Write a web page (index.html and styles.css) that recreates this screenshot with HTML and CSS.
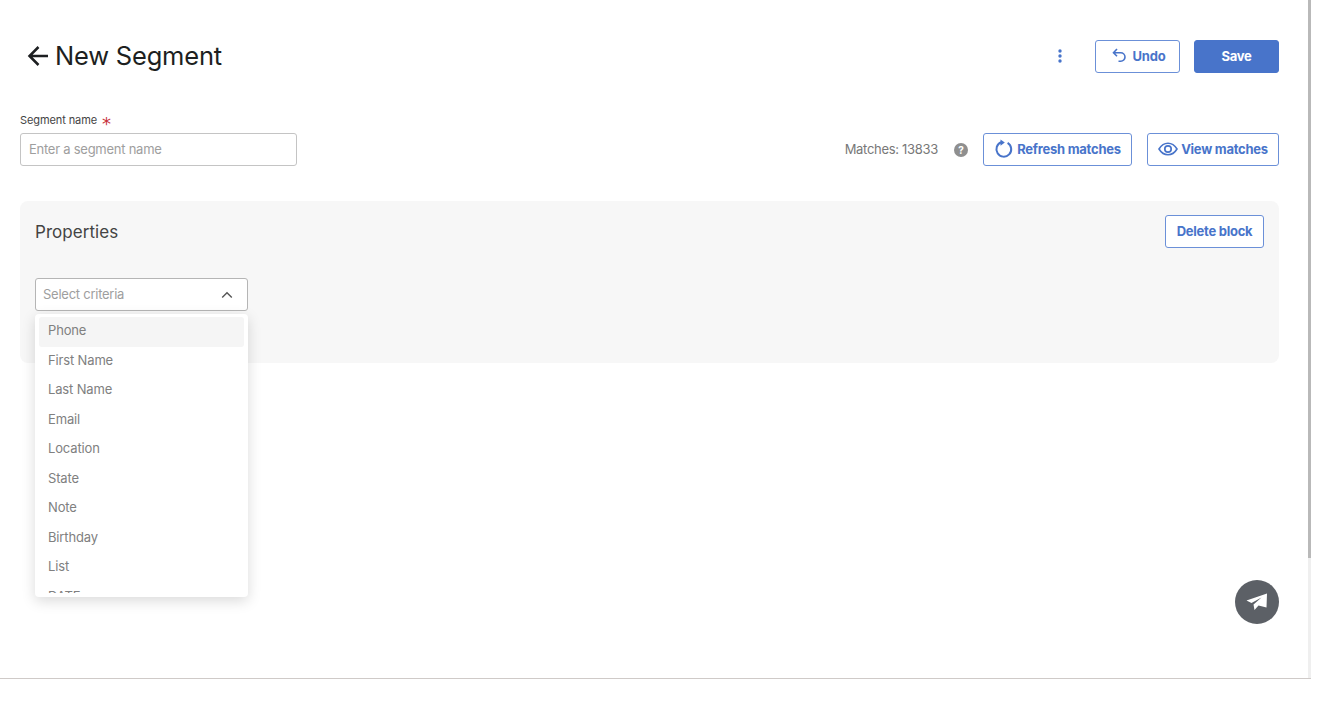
FILE: index.html
```html
<!DOCTYPE html>
<html lang="en">
<head>
<meta charset="utf-8">
<title>New Segment</title>
<link rel="stylesheet" href="styles.css">
</head>
<body>
<div class="frame">
  <div class="page">
    <header class="top">
      <h1 class="title">
        <svg class="back" width="24" height="24" viewBox="0 0 24 24"><path d="M22 12H3.500M12.500 3l-9 9 9 9" fill="none" stroke="#1d1f21" stroke-width="2.500"/></svg>
        New Segment
      </h1>
      <div class="actions">
        <svg class="dots" width="4" height="14" viewBox="0 0 4 14"><circle cx="2" cy="2" r="1.700"/><circle cx="2" cy="7" r="1.700"/><circle cx="2" cy="12" r="1.700"/></svg>
        <button class="btn undo">
          <svg width="15" height="15" viewBox="0 0 15 15"><path d="M2.500 4.700h6.200a4.300 4.300 0 0 1 0 8.600H6.500M5 1 1.500 4.700 5 8.200" fill="none" stroke="#4874ca" stroke-width="1.600"/></svg>
          Undo
        </button>
        <button class="btn solid">Save</button>
      </div>
    </header>

    <section class="fields">
      <div class="field">
        <label class="label">Segment name <span class="req">*</span></label>
        <div class="input"><span class="ph">Enter a segment name</span></div>
      </div>
      <div class="matches">
        <span class="count">Matches: 13833</span>
        <svg class="help" width="14" height="14" viewBox="0 0 14 14"><circle cx="7" cy="7" r="7" fill="#8f8f8f"/><text x="7" y="10.800" text-anchor="middle" class="help-mark">?</text></svg>
        <button class="btn refresh">
          <svg width="20" height="20" viewBox="0 0 20 20"><path d="M7.300 3.300a7.400 7.400 0 1 0 6.300.6" fill="none" stroke="#4874ca" stroke-width="2"/><path d="M6.500.5v6.200l4.300-3.100z" fill="#4874ca"/></svg>
          Refresh matches
        </button>
        <button class="btn view">
          <svg width="20" height="14" viewBox="0 0 20 14"><path d="M1 7c2.300-3.800 5.400-5.800 9-5.800s6.700 2 9 5.800c-2.300 3.800-5.400 5.800-9 5.800S3.300 10.800 1 7z" fill="none" stroke="#4874ca" stroke-width="1.600"/><circle cx="10" cy="7" r="3.200" fill="none" stroke="#4874ca" stroke-width="1.700"/></svg>
          View matches
        </button>
      </div>
    </section>

    <section class="panel">
      <div class="panel-head">
        <h2 class="panel-title">Properties</h2>
        <button class="btn delete">Delete block</button>
      </div>
      <div class="select">
        <span class="ph">Select criteria</span>
        <svg width="12" height="8" viewBox="0 0 12 8"><path d="M1.200 6.500 6 1.800l4.800 4.700" fill="none" stroke="#555" stroke-width="1.400"/></svg>
      </div>
    </section>
  </div>

  <div class="menu">
    <ul class="list">
      <li class="item active">Phone</li>
      <li class="item">First Name</li>
      <li class="item">Last Name</li>
      <li class="item">Email</li>
      <li class="item">Location</li>
      <li class="item">State</li>
      <li class="item">Note</li>
      <li class="item">Birthday</li>
      <li class="item">List</li>
      <li class="item">DATE</li>
    </ul>
  </div>

  <div class="chat">
    <svg width="22" height="18" viewBox="0 0 22 18"><path d="M0.500 7.500 21 0.500 20.500 14.500 12.500 12.500 8.500 17 7.500 11.500 15.500 4.500 5.500 10z" fill="#fff"/></svg>
  </div>

  <div class="scrollbar"><div class="thumb"></div></div>
</div>
</body>
</html>
```
FILE: styles.css
```css
* { box-sizing: border-box; }
html, body { margin: 0; padding: 0; background: #fff; }
body { font-family: Inter, "Liberation Sans", sans-serif; color: #333; overflow: hidden; }

.frame {
  position: relative;
  width: 1311px;
  height: 679px;
  border-bottom: 1px solid #cfcac8;
  overflow: hidden;
}
.page { padding: 40px 32px 0 20px; }

.top { display: flex; justify-content: space-between; align-items: center; height: 33px; }
.title {
  display: flex; align-items: center; gap: 5px;
  margin: 0 0 2px 6px;
  font-size: 25.500px; font-weight: 400; color: #1d1f21;
  letter-spacing: -0.2px;
}
.back { flex: none; }
.actions { display: flex; align-items: center; }
.dots { fill: #4874ca; margin-right: 33px; margin-bottom: 1px; }

.btn {
  display: inline-flex; align-items: center; justify-content: center;
  height: 33px; padding: 0 0 2px;
  background: #fff;
  border: 1px solid #6b90d8; border-radius: 3px;
  color: #4874ca;
  font-family: Inter, "Liberation Sans", sans-serif;
  font-size: 13px; font-weight: 700; letter-spacing: -0.25px;
}
.undo { width: 85px; gap: 6px; margin-right: 14px; padding-left: 2px; }
.solid { width: 85px; background: #4874ca; border-color: #4874ca; color: #fff; }

.fields { display: flex; justify-content: space-between; align-items: flex-end; margin-top: 40px; }
.label { display: block; height: 14px; font-size: 11px; line-height: 14px; color: #444; margin-bottom: 6px; letter-spacing: -0.1px; }
.req { font-family: "DejaVu Sans", sans-serif; color: #c8323c; font-size: 18px; line-height: 10px; margin-left: 2px; vertical-align: -6px; }
.input {
  display: flex; align-items: center;
  width: 277px; height: 33px; padding: 0 8px 2px;
  border: 1px solid #c4c4c4; border-radius: 3px;
}
.ph { font-size: 13px; color: #9e9e9e; letter-spacing: -0.25px; }

.matches { display: flex; align-items: center; }
.count { font-size: 13px; color: #787878; margin-right: 16px; letter-spacing: -0.3px; margin-bottom: 2px; }
.help { margin-right: 15px; }
.help-mark { font-size: 10px; font-weight: 700; fill: #fff; font-family: Inter, sans-serif; }
.refresh { width: 149px; gap: 3px; margin-right: 15px; }
.view { width: 132px; gap: 3px; }

.panel {
  margin-top: 35px;
  height: 162px; padding: 14px 15px;
  background: #f7f7f7; border-radius: 8px;
}
.panel-head { display: flex; justify-content: space-between; align-items: center; }
.panel-title { margin: 0; font-size: 17px; font-weight: 400; color: #444; letter-spacing: 0.05px; }
.delete { width: 99px; }
.select {
  display: flex; justify-content: space-between; align-items: center;
  width: 213px; height: 33px; margin-top: 30px; padding: 0 14px 0 7px;
  background: #fff;
  border: 1px solid #b5b5b5; border-radius: 3px;
}
.select .ph { margin-bottom: 2px; }

.menu {
  position: absolute; left: 35px; top: 314px;
  width: 213px; height: 283px;
  padding: 3px 4px 4px;
  background: #fff; border-radius: 4px;
  box-shadow: 0 4px 14px rgba(0, 0, 0, 0.15);
}
.list { height: 276px; margin: 0; padding: 0; list-style: none; overflow: hidden; }
.item {
  display: flex; align-items: center;
  height: 29.500px; padding: 0 9px 3px;
  font-size: 13px; color: #808080; border-radius: 3px; letter-spacing: -0.15px;
}
.active { background: #f5f5f5; }

.chat {
  position: absolute; left: 1235px; top: 580px;
  display: flex; align-items: center; justify-content: center;
  width: 44px; height: 44px;
  background: #5c6066; border-radius: 50%;
}

.scrollbar { position: absolute; right: 0; top: 0; width: 3px; height: 100%; background: #efefef; }
.thumb { height: 558px; background: #b9b9b9; }
```
